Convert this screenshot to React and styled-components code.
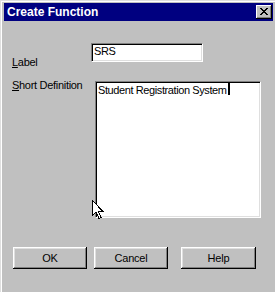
import React from "react";
import styled, { createGlobalStyle } from "styled-components";

const Global = createGlobalStyle`
  html, body { margin: 0; padding: 0; background: #c0c0c0; }
  body { width: 275px; height: 292px; overflow: hidden; }
`;

const Window = styled.div`
  position: relative;
  box-sizing: border-box;
  width: 275px;
  height: 292px;
  background: #c0c0c0;
  padding: 3px 2px 0 4px;
  box-shadow: inset 1px 1px 0 #dfdfdf, inset 2px 2px 0 #ffffff;
  font-family: "Liberation Sans", Arial, sans-serif;
  font-size: 11px;
  color: #000;
`;

const TitleBar = styled.div`
  display: flex;
  align-items: center;
  justify-content: space-between;
  height: 18px;
  background: #000080;
  padding: 0 1px 0 3px;
  color: #fff;
  font-weight: bold;
  font-size: 12px;
`;

const CloseButton = styled.div`
  box-sizing: border-box;
  width: 16px;
  height: 14px;
  background: #c0c0c0;
  box-shadow: inset -1px -1px 0 #000, inset 1px 1px 0 #fff, inset -2px -2px 0 #808080;
  display: flex;
  align-items: center;
  justify-content: center;
  padding: 0 1px 1px 0;
`;

const Content = styled.div`
  padding: 22px 0 0 8px;
`;

const Row = styled.div`
  display: flex;
  align-items: flex-start;
  height: ${(p) => p.$h}px;
  margin-top: ${(p) => p.$top || 0}px;
`;

const Label = styled.div`
  width: ${(p) => p.$width}px;
  margin-top: ${(p) => p.$drop}px;
  line-height: 13px;
  white-space: nowrap;
  letter-spacing: -0.3px;
`;

const Sunken = styled.div`
  box-sizing: border-box;
  width: ${(p) => p.$w}px;
  height: ${(p) => p.$h}px;
  background: #fff;
  border-style: solid;
  border-width: 1px;
  border-color: #808080 #fff #fff #808080;
  box-shadow: inset 1px 1px 0 #000, inset -1px -1px 0 #dfdfdf;
  padding: ${(p) => p.$pad};
  line-height: 13px;
  letter-spacing: -0.4px;
  white-space: nowrap;
`;

const Caret = styled.span`
  display: inline-block;
  width: 2px;
  height: 13px;
  background: #000;
  vertical-align: top;
  margin-left: 1px;
  margin-top: -2px;
`;

const ButtonRow = styled.div`
  display: flex;
  gap: 7px;
  margin-top: 29px;
  padding-left: 1px;
`;

const Button = styled.div`
  box-sizing: border-box;
  width: ${(p) => p.$w}px;
  height: 22px;
  margin-left: ${(p) => p.$push || 0}px;
  background: #c0c0c0;
  box-shadow: inset -1px -1px 0 #000, inset 1px 1px 0 #fff, inset -2px -2px 0 #808080, inset 2px 2px 0 #dfdfdf;
  display: flex;
  align-items: center;
  justify-content: center;
  padding-bottom: 1px;
  letter-spacing: -0.2px;
`;

const Pointer = styled.svg`
  position: absolute;
  left: 92px;
  top: 200px;
`;

const XGlyph = () => (
  <svg width="8" height="7" viewBox="0 0 8 7" shapeRendering="crispEdges">
    <path
      d="M0 0h2v1H0zM6 0h2v1H6zM1 1h2v1H1zM5 1h2v1H5zM2 2h4v1H2zM3 3h2v1H3zM2 4h4v1H2zM1 5h2v1H1zM5 5h2v1H5zM0 6h2v1H0zM6 6h2v1H6z"
      fill="#000"
    />
  </svg>
);

export default function App() {
  return (
    <>
      <Global />
      <Window>
        <TitleBar>
          <span>Create Function</span>
          <CloseButton>
            <XGlyph />
          </CloseButton>
        </TitleBar>
        <Content>
          <Row $h={19}>
            <Label $width={79} $drop={13}>
              <u>L</u>abel
            </Label>
            <Sunken $w={112} $h={19} $pad="1px 2px">
              SRS
            </Sunken>
          </Row>
          <Row $h={137} $top={19}>
            <Label $width={83} $drop={-2}>
              <u>S</u>hort Definition
            </Label>
            <Sunken $w={166} $h={137} $pad="2px 2px">
              Student Registration System
              <Caret />
            </Sunken>
          </Row>
          <ButtonRow>
            <Button $w={74}>OK</Button>
            <Button $w={74}>Cancel</Button>
            <Button $w={75} $push={6}>Help</Button>
          </ButtonRow>
        </Content>
        <Pointer width="12" height="19" viewBox="0 0 12 19" shapeRendering="crispEdges">
          <path
            d="M0.5 0.5 L0.5 15.5 L4 12 L7 18.5 L9 17.5 L6.5 11.5 L11 11.5 Z"
            fill="#fff"
            stroke="#000"
            strokeWidth="1"
          />
        </Pointer>
      </Window>
    </>
  );
}
